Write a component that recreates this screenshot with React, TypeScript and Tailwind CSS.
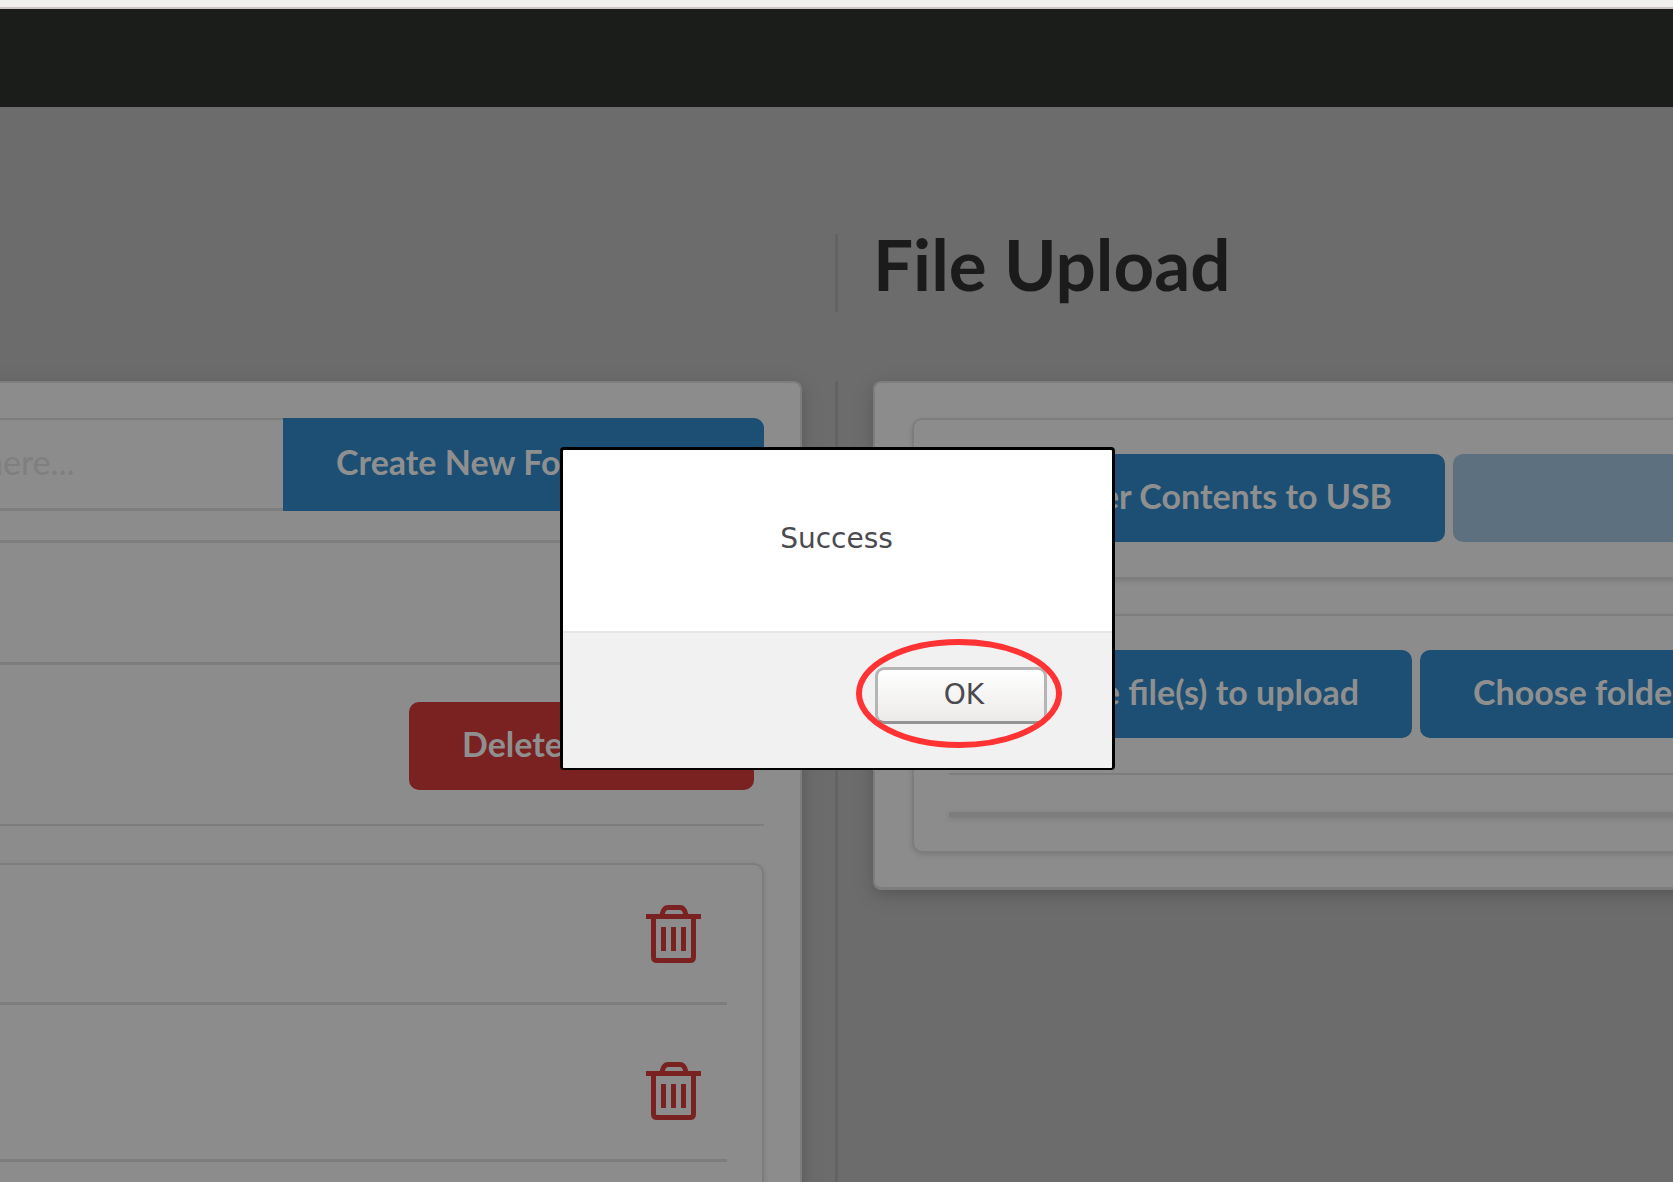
import React from "react";

const panel =
  "border-2 border-[#7d7d7d] bg-[#8c8c8c] shadow-[0_5px_10px_rgba(0,0,0,0.10),0_5px_24px_rgba(0,0,0,0.10)]";
const segment =
  "rounded-l-[10px] border-2 border-r-0 border-[#7d7d7d] shadow-[0_2px_5px_rgba(0,0,0,0.12)]";
const button =
  "h-[88px] shrink-0 whitespace-nowrap rounded-[10px] px-[53px] pb-1 text-[34px] font-bold leading-[40px] text-[#8f8f8f]";

function TrashIcon() {
  return (
    <svg width="55" height="58" viewBox="0 0 55 58" fill="none" stroke="#7a2222" strokeWidth="5" aria-hidden="true">
      <path d="M0 11.500H55" />
      <path d="M16 10C17 5 19 2.500 22 2.500H34C37 2.500 39 5 40 10" />
      <path d="M7.500 12V52Q7.500 55.500 11 55.500H44Q47.500 55.500 47.500 52V12" />
      <path d="M17.500 22V46M27.500 22V46M37.500 22V46" />
    </svg>
  );
}

function FileRow() {
  return (
    <li className="flex h-[157px] items-end justify-end border-b-[3px] border-[#7d7d7d] pb-[39px] pr-[26px] first:h-[140px]">
      <button aria-label="Delete file">
        <TrashIcon />
      </button>
    </li>
  );
}

function FolderPanel() {
  return (
    <section className={`${panel} -ml-10 flex-1 rounded-tr-[8px] border-b-0 border-l-0 pr-9 pt-[35px]`}>
      <div className="flex h-[93px]">
        <input
          aria-label="Folder name"
          placeholder="here..."
          className="min-w-0 flex-1 border-b-[3px] border-t-2 border-[#7d7d7d] pb-[6px] pl-6 text-[34px] outline-none placeholder:text-[#7f7f7f]"
        />
        <button className="w-[481px] rounded-r-[10px] bg-[#1d4f74] px-[53px] pb-[6px] text-left text-[34px] font-bold text-[#8f8f8f]">
          Create New Folder
        </button>
      </div>
      <div className="mt-[29px] h-[125px] border-y-[3px] border-[#7d7d7d]" />
      <div className="flex h-[161px] items-center justify-end border-b-2 border-[#7d7d7d] pr-[10px] pt-[2px]">
        <button className={`${button} w-[345px] bg-[#7a2222] text-left`}>Delete Folder</button>
      </div>
      <ul className="mt-[37px] rounded-tr-[10px] border-r-2 border-t-2 border-[#7d7d7d] pr-[35px] shadow-[0_2px_5px_rgba(0,0,0,0.12)]">
        <FileRow />
        <FileRow />
        <FileRow />
      </ul>
    </section>
  );
}

function UploadPanel() {
  return (
    <section className={`${panel} -mr-10 rounded-l-[8px] border-b-[3px] border-r-0 pb-[34px] pl-[37px] pt-[35px]`}>
      <div className={`${segment} flex h-[161px] gap-2 pl-[35px] pt-[34px]`}>
        <button className={`${button} w-[496px] bg-[#1d4f74] text-right`}>Transfer Contents to USB</button>
        <button aria-label="Transfer" disabled className="h-[88px] flex-1 rounded-l-[10px] bg-[#5c7080]" />
      </div>
      <div className={`${segment} mt-[35px] h-[239px] pl-[35px] pt-[34px]`}>
        <div className="flex gap-2 overflow-hidden">
          <button className={`${button} w-[463px] bg-[#1d4f74] text-right`}>Choose file(s) to upload</button>
          <button className={`${button} bg-[#1d4f74]`}>Choose folder to upload</button>
        </div>
        <div className="mt-[35px] h-[2px] bg-[#7d7d7d]" />
        <div className="mt-[37px] h-[5px] bg-[#7d7d7d] shadow-[0_2px_5px_rgba(0,0,0,0.12)]" />
      </div>
    </section>
  );
}

function SuccessDialog() {
  return (
    <div className="absolute inset-0 flex items-start justify-center pl-[2px] pt-[447px]">
      <div
        role="alertdialog"
        aria-labelledby="message"
        className="flex h-[323px] w-[555px] flex-col overflow-hidden rounded-[4px] border-[3px] border-b-2 border-black bg-white font-['DejaVu_Sans',sans-serif] text-[28px] leading-[40px] text-[#4a4a4f]"
      >
        <p id="message" className="flex flex-1 items-center justify-center pb-1 pr-[2px]">
          Success
        </p>
        <div className="flex h-[137px] justify-end border-t-2 border-[#e5e5e5] bg-[#f1f1f1] pr-[65px] pt-[34px]">
          <div className="relative h-[57px] w-[172px]">
            <button className="h-full w-full rounded-[9px] border-[3px] border-[#b5b5b5] border-b-[#949494] bg-gradient-to-b from-white to-[#ecebe9] pb-[2px] pl-[6px]">
              OK
            </button>
            <svg
              className="pointer-events-none absolute -left-[19px] -top-[28px]"
              width="206"
              height="109"
              viewBox="0 0 206 109"
              fill="none"
              aria-hidden="true"
            >
              <ellipse cx="103" cy="54.500" rx="100" ry="51.500" stroke="#ff3333" strokeWidth="6" />
            </svg>
          </div>
        </div>
      </div>
    </div>
  );
}

export default function App() {
  return (
    <div className="relative flex h-screen flex-col overflow-hidden bg-[#6c6c6c] font-[Lato,sans-serif]">
      <div className="h-[9px] shrink-0 border-b-2 border-[#cdc5c4] bg-[#f0efed]" />
      <header className="h-[98px] shrink-0 bg-[#1b1d1b]" />
      <main className="flex min-h-0 flex-1 flex-col">
        <div className="mt-[127px] grid h-[78px] shrink-0 grid-cols-[1fr_3px_1fr]">
          <div />
          <div className="bg-[#636363]" />
          <h1 className="pl-[35px] text-[71px] font-bold leading-[60px] text-[#1b1b1b]">File Upload</h1>
        </div>
        <div className="mt-[69px] grid min-h-0 flex-1 grid-cols-[minmax(0,1fr)_3px_minmax(0,1fr)]">
          <div className="flex flex-col pr-[33px]">
            <FolderPanel />
          </div>
          <div className="bg-[#636363]" />
          <div className="pl-[35px]">
            <UploadPanel />
          </div>
        </div>
      </main>
      <SuccessDialog />
    </div>
  );
}
